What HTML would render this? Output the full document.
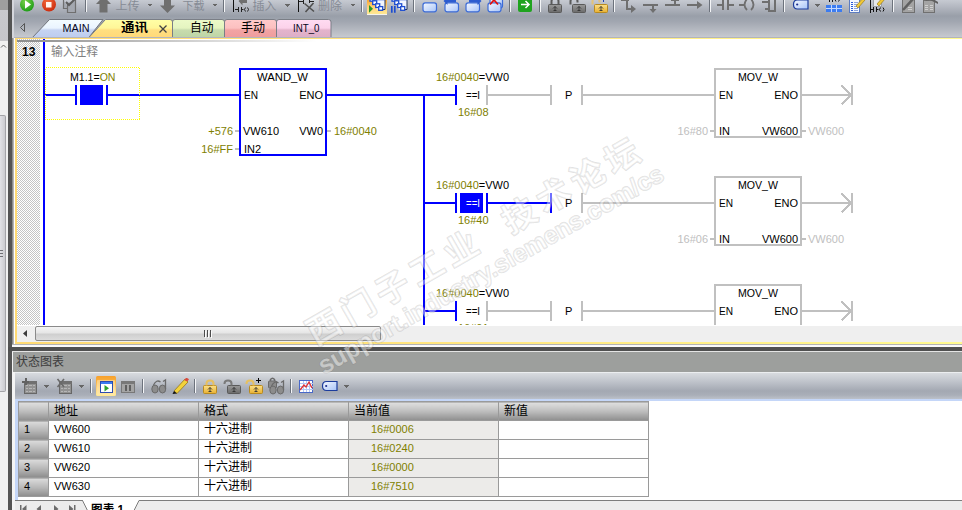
<!DOCTYPE html>
<html lang="zh-CN">
<head>
<meta charset="utf-8">
<title>STEP 7-Micro/WIN SMART</title>
<style>
html,body{margin:0;padding:0}
body{width:962px;height:510px;position:relative;overflow:hidden;background:#fff;font-family:"Liberation Sans","Noto Sans CJK SC",sans-serif;font-size:11px;color:#000}
div,span{position:absolute;box-sizing:border-box}
svg{position:absolute;left:0;top:0}
svg text{font-family:"Liberation Sans","Noto Sans CJK SC",sans-serif;font-size:11px}
.cj{font-family:"Liberation Sans","Noto Sans CJK SC",sans-serif;font-size:12px}
#leftstrip{left:0;top:0;width:8px;height:510px;background:linear-gradient(#9e9e9e 0,#9e9e9e 10px,#c9c9cd 10px,#c6c6ca 41px,#f0f0f0 41px)}
#lthumb{left:0;top:115px;width:6px;height:277px;border:1px solid #a4a4a8;border-left:none;border-radius:0 2px 2px 0;background:linear-gradient(90deg,#e2e2e6,#cbcbcf)}
#edge{left:12px;top:38px;width:3px;height:306px;background:linear-gradient(90deg,#8c8c8c 0,#8c8c8c 1px,#b4b4b4 1px,#b4b4b4 2px,#808080 2px)}
#edge2{left:12px;top:351px;width:3px;height:159px;background:#f4f4f4}
#darkbar{left:8px;top:0;width:4px;height:510px;background:#545454}
#toolbar{left:12px;top:0;width:950px;height:38px;border-left:2px solid #d4d6dc;background:linear-gradient(#c6cad2 0,#b3b7c0 7px,#999fa9 16px,#a2a7b1 22px,#c4c7cd 36px,#c9ccd1 38px)}
.tab{top:20px;height:18px;border-radius:3px 3px 0 0;text-align:center;line-height:17px;font-size:12px}
#editor{left:14px;top:38px;width:948px;height:306px;background:#fff}
#gutter{left:17px;top:42px;width:23px;height:283px;background:#dedede}
#hscroll{left:17px;top:326px;width:945px;height:16px;background:#efefef}
#thumb{left:35px;top:326px;width:346px;height:15px;border:1px solid #8a8a8a;border-radius:2px;background:linear-gradient(#f4f4f4 0,#e6e6e6 45%,#cfcfcf 55%,#dcdcdc 100%)}
#split{left:8px;top:347px;width:954px;height:4px;background:#505050}
#sttitle{left:13px;top:352px;width:949px;height:20px;background:#9d9f9d;color:#3c3c3c;font-size:12px;line-height:21px;padding-left:3px;overflow:hidden}
#sttool{left:15px;top:372px;width:949px;height:27px;border-top:1px solid #eceef0;background:linear-gradient(#d8dbdf 0,#c4c8cf 7px,#a3a8b2 18px,#a9aeb8 22px,#bcc1ca 26px)}
#stbody{left:15px;top:399px;width:947px;height:101px;background:#fff;border-top:2px solid #c4d6f8;border-left:3px solid #c4d6f8}
#stfoot{left:15px;top:500px;width:949px;height:10px;background:#ececec;border-top:1px solid #8c8c8c}
table{position:absolute;left:18px;top:401px;border-collapse:collapse;font-size:11px}
td,th{border:1px solid #9a9a9a;height:19px;padding:0 0 2px 5px;text-align:left;font-weight:normal;box-sizing:border-box;white-space:nowrap;line-height:15px}
th{background:linear-gradient(#e0e0e0,#bdbdbd 50%,#8e8e8e);font-size:12px;height:19px;padding:1px 0 0 5px}
td.n{background:linear-gradient(#dcdcdc,#b4b4b4 55%,#8c8c8c);padding-left:5px}
td.v{background:#ecebe9;color:#808000;padding-left:22px}
</style>
</head>
<body>
<div id="leftstrip"></div>
<div id="lthumb"></div>
<div id="darkbar"></div>
<div id="edge"></div>
<div id="edge2"></div>
<div id="toolbar"></div>

<div id="editor"></div>
<div id="gutter"></div>
<div id="hscroll"></div>
<div id="thumb"></div>
<div id="split"></div>
<div id="sttitle" class="cj">状态图表</div>
<div id="sttool"></div>
<div id="stbody"></div>
<div id="stfoot"></div>

<table>
<tr><th style="width:30px"></th><th style="width:150px">地址</th><th style="width:150px">格式</th><th style="width:150px">当前值</th><th style="width:150px">新值</th></tr>
<tr><td class="n">1</td><td>VW600</td><td class="cj">十六进制</td><td class="v">16#0006</td><td></td></tr>
<tr><td class="n">2</td><td>VW610</td><td class="cj">十六进制</td><td class="v">16#0240</td><td></td></tr>
<tr><td class="n">3</td><td>VW620</td><td class="cj">十六进制</td><td class="v">16#0000</td><td></td></tr>
<tr><td class="n">4</td><td>VW630</td><td class="cj">十六进制</td><td class="v">16#7510</td><td></td></tr>
</table>

<svg id="ladder" width="962" height="325" viewBox="0 0 962 325" shape-rendering="crispEdges">
<rect x="43" y="39" width="2" height="286" fill="#0000ff"/>
<rect x="45" y="94" width="30" height="2" fill="#0000ff"/>
<rect x="75" y="85" width="2" height="20" fill="#0000ff"/>
<rect x="80" y="85" width="23" height="20" fill="#0000ff"/>
<rect x="106" y="85" width="2" height="20" fill="#0000ff"/>
<rect x="108" y="94" width="131" height="2" fill="#0000ff"/>
<rect x="45.5" y="67.5" width="94" height="52" fill="none" stroke="#ffff00" stroke-width="1" stroke-dasharray="1 1"/>
<text x="70" y="81" textLength="45.5" lengthAdjust="spacingAndGlyphs"><tspan fill="#000">M1.1=</tspan><tspan fill="#808000">ON</tspan></text>
<rect x="240" y="69" width="86" height="86" fill="none" stroke="#0000ff" stroke-width="2"/>
<text x="257" y="81" fill="#000" textLength="51" lengthAdjust="spacingAndGlyphs">WAND_W</text>
<text x="244" y="99" fill="#000" textLength="14" lengthAdjust="spacingAndGlyphs">EN</text>
<text x="323" y="99" fill="#000" text-anchor="end">ENO</text>
<text x="243" y="135" fill="#000">VW610</text>
<text x="323" y="135" fill="#000" text-anchor="end">VW0</text>
<text x="244" y="153" fill="#000">IN2</text>
<text x="233" y="135" fill="#808000" text-anchor="end">+576</text>
<text x="233" y="153" fill="#808000" text-anchor="end">16#FF</text>
<text x="334" y="135" fill="#808000">16#0040</text>
<rect x="235" y="130" width="4" height="2" fill="#c0c0c0"/>
<rect x="235" y="148" width="4" height="2" fill="#c0c0c0"/>
<rect x="327" y="130" width="4" height="2" fill="#c0c0c0"/>
<rect x="327" y="94" width="98" height="2" fill="#0000ff"/>
<rect x="423" y="94" width="2" height="231" fill="#0000ff"/>
<rect x="425" y="94" width="30" height="2" fill="#0000ff"/>
<rect x="455" y="85" width="2" height="20" fill="#0000ff"/>
<rect x="486" y="85" width="2" height="20" fill="#c0c0c0"/>
<rect x="488" y="94" width="62" height="2" fill="#c0c0c0"/>
<rect x="550" y="85" width="2" height="20" fill="#c0c0c0"/>
<rect x="581" y="85" width="2" height="20" fill="#c0c0c0"/>
<rect x="583" y="94" width="131" height="2" fill="#c0c0c0"/>
<text x="436" y="81" textLength="73" lengthAdjust="spacingAndGlyphs"><tspan fill="#808000">16#0040</tspan><tspan fill="#000">=VW0</tspan></text>
<text x="466" y="99" fill="#000" textLength="14" lengthAdjust="spacingAndGlyphs">==I</text>
<text x="565" y="99" fill="#000">P</text>
<rect x="715" y="69" width="86" height="68" fill="none" stroke="#c0c0c0" stroke-width="2"/>
<text x="738" y="81" fill="#000" textLength="40" lengthAdjust="spacingAndGlyphs">MOV_W</text>
<text x="719" y="99" fill="#000" textLength="14" lengthAdjust="spacingAndGlyphs">EN</text>
<text x="798" y="99" fill="#000" text-anchor="end">ENO</text>
<text x="719" y="135" fill="#000">IN</text>
<text x="798" y="135" fill="#000" text-anchor="end">VW600</text>
<rect x="710" y="130" width="4" height="2" fill="#c0c0c0"/>
<rect x="802" y="130" width="4" height="2" fill="#c0c0c0"/>
<text x="808" y="135" fill="#c0c0c0">VW600</text>
<rect x="802" y="94" width="49" height="2" fill="#c0c0c0"/>
<rect x="851" y="85" width="2" height="20" fill="#c0c0c0"/>
<path d="M841.5 85.5 L851 95 L841.5 104.5" fill="none" stroke="#c0c0c0" stroke-width="2"/>
<rect x="425" y="202" width="30" height="2" fill="#0000ff"/>
<rect x="455" y="193" width="2" height="20" fill="#0000ff"/>
<rect x="460" y="193" width="23" height="20" fill="#0000ff"/>
<rect x="486" y="193" width="2" height="20" fill="#0000ff"/>
<rect x="488" y="202" width="62" height="2" fill="#0000ff"/>
<rect x="550" y="193" width="2" height="20" fill="#0000ff"/>
<rect x="581" y="193" width="2" height="20" fill="#c0c0c0"/>
<rect x="583" y="202" width="131" height="2" fill="#c0c0c0"/>
<text x="436" y="189" textLength="73" lengthAdjust="spacingAndGlyphs"><tspan fill="#808000">16#0040</tspan><tspan fill="#000">=VW0</tspan></text>
<text x="466" y="207" fill="#fff" textLength="14" lengthAdjust="spacingAndGlyphs">==I</text>
<text x="565" y="207" fill="#000">P</text>
<rect x="715" y="177" width="86" height="68" fill="none" stroke="#c0c0c0" stroke-width="2"/>
<text x="738" y="189" fill="#000" textLength="40" lengthAdjust="spacingAndGlyphs">MOV_W</text>
<text x="719" y="207" fill="#000" textLength="14" lengthAdjust="spacingAndGlyphs">EN</text>
<text x="798" y="207" fill="#000" text-anchor="end">ENO</text>
<text x="719" y="243" fill="#000">IN</text>
<text x="798" y="243" fill="#000" text-anchor="end">VW600</text>
<rect x="710" y="238" width="4" height="2" fill="#c0c0c0"/>
<rect x="802" y="238" width="4" height="2" fill="#c0c0c0"/>
<text x="808" y="243" fill="#c0c0c0">VW600</text>
<rect x="802" y="202" width="49" height="2" fill="#c0c0c0"/>
<rect x="851" y="193" width="2" height="20" fill="#c0c0c0"/>
<path d="M841.5 193.5 L851 203 L841.5 212.5" fill="none" stroke="#c0c0c0" stroke-width="2"/>
<rect x="425" y="310" width="30" height="2" fill="#0000ff"/>
<rect x="455" y="301" width="2" height="20" fill="#0000ff"/>
<rect x="486" y="301" width="2" height="20" fill="#c0c0c0"/>
<rect x="488" y="310" width="62" height="2" fill="#c0c0c0"/>
<rect x="550" y="301" width="2" height="20" fill="#c0c0c0"/>
<rect x="581" y="301" width="2" height="20" fill="#c0c0c0"/>
<rect x="583" y="310" width="131" height="2" fill="#c0c0c0"/>
<text x="436" y="297" textLength="73" lengthAdjust="spacingAndGlyphs"><tspan fill="#808000">16#0040</tspan><tspan fill="#000">=VW0</tspan></text>
<text x="466" y="315" fill="#000" textLength="14" lengthAdjust="spacingAndGlyphs">==I</text>
<text x="565" y="315" fill="#000">P</text>
<rect x="715" y="285" width="86" height="68" fill="none" stroke="#c0c0c0" stroke-width="2"/>
<text x="738" y="297" fill="#000" textLength="40" lengthAdjust="spacingAndGlyphs">MOV_W</text>
<text x="719" y="315" fill="#000" textLength="14" lengthAdjust="spacingAndGlyphs">EN</text>
<text x="798" y="315" fill="#000" text-anchor="end">ENO</text>
<text x="719" y="351" fill="#000">IN</text>
<text x="798" y="351" fill="#000" text-anchor="end">VW600</text>
<rect x="710" y="346" width="4" height="2" fill="#c0c0c0"/>
<rect x="802" y="346" width="4" height="2" fill="#c0c0c0"/>
<text x="808" y="351" fill="#c0c0c0">VW600</text>
<rect x="802" y="310" width="49" height="2" fill="#c0c0c0"/>
<rect x="851" y="301" width="2" height="20" fill="#c0c0c0"/>
<path d="M841.5 301.5 L851 311 L841.5 320.5" fill="none" stroke="#c0c0c0" stroke-width="2"/>
<text x="708" y="135" fill="#c0c0c0" text-anchor="end">16#80</text>
<text x="708" y="243" fill="#c0c0c0" text-anchor="end">16#06</text>
<text x="458" y="116" fill="#808000">16#08</text>
<text x="458" y="224" fill="#808000">16#40</text>
<text x="458" y="332" fill="#808000">16#01</text>
<text x="51" y="56" class="cj" fill="#808080" textLength="47" lengthAdjust="spacingAndGlyphs">输入注释</text>
</svg>
<svg id="chrome" width="962" height="510" viewBox="0 0 962 510" shape-rendering="crispEdges">
<defs>
<linearGradient id="gMain" x1="0" y1="0" x2="0" y2="1"><stop offset="0" stop-color="#f4fcff"/><stop offset="0.45" stop-color="#eaf4ff"/><stop offset="0.55" stop-color="#c6d4f2"/><stop offset="1" stop-color="#bccbee"/></linearGradient>
<linearGradient id="gYel" x1="0" y1="0" x2="0" y2="1"><stop offset="0" stop-color="#ffffa6"/><stop offset="0.45" stop-color="#fff698"/><stop offset="0.55" stop-color="#ffdf80"/><stop offset="1" stop-color="#ffd878"/></linearGradient>
<linearGradient id="gGrn" x1="0" y1="0" x2="0" y2="1"><stop offset="0" stop-color="#ecfac8"/><stop offset="0.45" stop-color="#e4f4c0"/><stop offset="0.55" stop-color="#c8dcae"/><stop offset="1" stop-color="#bcd4a4"/></linearGradient>
<linearGradient id="gRed" x1="0" y1="0" x2="0" y2="1"><stop offset="0" stop-color="#ffcaca"/><stop offset="0.45" stop-color="#fcc0c0"/><stop offset="0.55" stop-color="#f2a4a4"/><stop offset="1" stop-color="#ee9c9c"/></linearGradient>
<linearGradient id="gPnk" x1="0" y1="0" x2="0" y2="1"><stop offset="0" stop-color="#ffdcf2"/><stop offset="0.45" stop-color="#fcd2ea"/><stop offset="0.55" stop-color="#e4b4cc"/><stop offset="1" stop-color="#dcaec6"/></linearGradient>
<linearGradient id="gHot" x1="0" y1="0" x2="0" y2="1"><stop offset="0" stop-color="#f9b24a"/><stop offset="0.4" stop-color="#ffd890"/><stop offset="1" stop-color="#fff2c4"/></linearGradient>
<linearGradient id="gHot2" x1="0" y1="0" x2="0" y2="1"><stop offset="0" stop-color="#f7a02c"/><stop offset="0.25" stop-color="#f9b040"/><stop offset="0.6" stop-color="#ffd27a"/><stop offset="1" stop-color="#ffea96"/></linearGradient>
<linearGradient id="gBlu" x1="0" y1="0" x2="1" y2="1"><stop offset="0" stop-color="#f4f8ff"/><stop offset="1" stop-color="#a8c4f8"/></linearGradient>
<radialGradient id="gPlay" cx="0.4" cy="0.3" r="0.8"><stop offset="0" stop-color="#7ad24a"/><stop offset="1" stop-color="#129612"/></radialGradient>
<radialGradient id="gStop" cx="0.4" cy="0.3" r="0.8"><stop offset="0" stop-color="#f46a3c"/><stop offset="1" stop-color="#c62408"/></radialGradient>
<linearGradient id="gGold" x1="0" y1="0" x2="0" y2="1"><stop offset="0" stop-color="#fbe08a"/><stop offset="1" stop-color="#e8b030"/></linearGradient>
<linearGradient id="gLockG" x1="0" y1="0" x2="0" y2="1"><stop offset="0" stop-color="#9a9a9a"/><stop offset="1" stop-color="#6a6a6a"/></linearGradient>
<linearGradient id="gFade" x1="0" y1="0" x2="1" y2="0"><stop offset="0" stop-color="#8c8c8c"/><stop offset="0.5" stop-color="#c8c8c8"/><stop offset="1" stop-color="#ffffff"/></linearGradient>
<linearGradient id="gYelH" x1="0" y1="0" x2="1" y2="0"><stop offset="0" stop-color="#ffda74"/><stop offset="0.5" stop-color="#ffe680"/><stop offset="1" stop-color="#fffa90"/></linearGradient>
<pattern id="dots" width="2" height="2" patternUnits="userSpaceOnUse"><rect width="2" height="2" fill="#fff"/><rect width="1" height="1" fill="#c4c4c4"/><rect x="1" y="1" width="1" height="1" fill="#c4c4c4"/></pattern>
</defs>
<g shape-rendering="geometricPrecision">
<path d="M31.5 38.5 L49.5 19.5 H103 L88 38.5 Z" fill="url(#gMain)" stroke="#70747c" stroke-width="1"/>
<path d="M88 38.5 L105.5 19.5 H170 Q172.5 19.5 172.5 22 V38.5 Z" fill="url(#gYel)" stroke="#7a7e86" stroke-width="1"/>
<path d="M172.5 38.5 V22 Q172.5 19.5 175 19.5 H222 Q224.5 19.5 224.5 22 V38.5 Z" fill="url(#gGrn)" stroke="#7a7e86" stroke-width="1"/>
<path d="M224.5 38.5 V22 Q224.5 19.5 227 19.5 H274 Q276.5 19.5 276.5 22 V38.5 Z" fill="url(#gRed)" stroke="#7a7e86" stroke-width="1"/>
<path d="M276.5 38.5 V22 Q276.5 19.5 279 19.5 H328.5 Q331 19.5 331 22 V38.5 Z" fill="url(#gPnk)" stroke="#7a7e86" stroke-width="1"/>
<path d="M24.5 23.5 L20.5 27.5 L24.5 31.5 Z" fill="none" stroke="#555" stroke-width="1"/>
</g>
<text x="62.5" y="32" fill="#06061c" textLength="27" lengthAdjust="spacingAndGlyphs">MAIN</text>
<text x="121" y="32" class="cj" font-weight="bold" textLength="27" lengthAdjust="spacingAndGlyphs">通讯</text>
<path d="M159.5 25.5 l7 7 M166.5 25.5 l-7 7" stroke="#444" stroke-width="1.3" fill="none" shape-rendering="geometricPrecision"/>
<text x="190" y="32" class="cj" textLength="23.5" lengthAdjust="spacingAndGlyphs">自动</text>
<text x="241" y="32" class="cj" textLength="24" lengthAdjust="spacingAndGlyphs">手动</text>
<text x="293" y="32" fill="#06061c" textLength="26.5" lengthAdjust="spacingAndGlyphs">INT_0</text>
<rect x="14" y="37" width="948" height="1" fill="#b2b4bc"/>
<rect x="15" y="38" width="947" height="1" fill="url(#gYelH)"/>
<rect x="15" y="38" width="2" height="306" fill="#ffda74"/>
<rect x="15" y="342" width="947" height="2" fill="url(#gYelH)"/>
<rect x="12" y="344" width="950" height="1" fill="#b4b4b4"/>
<rect x="12" y="345" width="950" height="2" fill="#fafafa"/>
<rect x="12" y="351" width="950" height="1" fill="#e4e4e4"/>
<rect x="17" y="39" width="23" height="1" fill="url(#dots)"/>
<rect x="17" y="40" width="300" height="2" fill="url(#gFade)"/>
<rect x="17" y="42" width="23" height="283" fill="url(#dots)"/>
<text x="22" y="56" font-weight="bold" style="font-size:12.5px" textLength="13.5" lengthAdjust="spacingAndGlyphs">13</text>
<g shape-rendering="geometricPrecision">
<circle cx="27" cy="4.5" r="7" fill="url(#gPlay)"/><path d="M25 0.2 L31 4.5 L25 8.8 Z" fill="#fff"/>
<circle cx="49" cy="4.5" r="7" fill="url(#gStop)"/><rect x="46" y="2" width="5.5" height="5.5" fill="#fff4ee"/>
<path d="M63.5 0 V8.5 H68 M67.5 3 V12.5 H75.5 V0" fill="#a4a8b0" stroke="#6f6f6f" stroke-width="1.2"/><path d="M66 2 l3 3 l6 -6" fill="none" stroke="#5c5c5c" stroke-width="2"/>
<path d="M96 4 L103.5 -4 L111 4 H107.5 V12.5 H99.5 V4 Z" fill="#6f6f6f"/>
<path d="M164 -2 H171 V5.5 H175 L167.5 13 L160 5.5 H164 Z" fill="#6f6f6f"/>
</g>
<rect x="85" y="0" width="1" height="12" fill="#6c727c"/><rect x="86" y="0" width="1" height="12" fill="#f4f5f7"/>
<rect x="223" y="0" width="1" height="12" fill="#6c727c"/><rect x="224" y="0" width="1" height="12" fill="#f4f5f7"/>
<rect x="361" y="0" width="1" height="12" fill="#6c727c"/><rect x="362" y="0" width="1" height="12" fill="#f4f5f7"/>
<rect x="413" y="0" width="1" height="12" fill="#6c727c"/><rect x="414" y="0" width="1" height="12" fill="#f4f5f7"/>
<rect x="509" y="0" width="1" height="12" fill="#6c727c"/><rect x="510" y="0" width="1" height="12" fill="#f4f5f7"/>
<rect x="539" y="0" width="1" height="12" fill="#6c727c"/><rect x="540" y="0" width="1" height="12" fill="#f4f5f7"/>
<rect x="613" y="0" width="1" height="12" fill="#6c727c"/><rect x="614" y="0" width="1" height="12" fill="#f4f5f7"/>
<rect x="709" y="0" width="1" height="12" fill="#6c727c"/><rect x="710" y="0" width="1" height="12" fill="#f4f5f7"/>
<rect x="783" y="0" width="1" height="12" fill="#6c727c"/><rect x="784" y="0" width="1" height="12" fill="#f4f5f7"/>
<rect x="892" y="0" width="1" height="12" fill="#6c727c"/><rect x="893" y="0" width="1" height="12" fill="#f4f5f7"/>
<path d="M147.5 4h5l-2.5 3z" fill="#666"/>
<path d="M212.5 4h5l-2.5 3z" fill="#666"/>
<path d="M285 4h5l-2.5 3z" fill="#666"/>
<path d="M350.5 4h5l-2.5 3z" fill="#666"/>
<path d="M815 4h5l-2.5 3z" fill="#666"/>
<g class="cj" fill="#868b95">
<text x="115.5" y="9.5" textLength="24" lengthAdjust="spacingAndGlyphs">上传</text>
<text x="182.5" y="9.5" textLength="22" lengthAdjust="spacingAndGlyphs">下载</text>
<text x="252.5" y="9.5" textLength="24" lengthAdjust="spacingAndGlyphs">插入</text>
<text x="318" y="9.5" textLength="24" lengthAdjust="spacingAndGlyphs">删除</text>
</g>
<rect x="233" y="0" width="1" height="12" fill="#111"/>
<path d="M238.5 1 L242.5 -3 V-0.5 H247 V3 H242.5 V5.5 Z" fill="#6f6f6f" shape-rendering="geometricPrecision"/>
<path d="M235 9.5 h3 M238.5 7 v5 M241.5 7 v5 M241.5 9.5 h2 M245.5 7.5 q-2 2 0 4 M247.5 7.5 q2 2 0 4" stroke="#222" stroke-width="1" fill="none" shape-rendering="geometricPrecision"/>
<rect x="298" y="0" width="1" height="12" fill="#111"/>
<path d="M299 1.5 h4 M303.5 -1 v5 M309.5 -1 v4 M309.5 1.5 h4" stroke="#222" stroke-width="1" fill="none"/>
<path d="M304.5 3.5 L314 11.5 M313.5 3 L305.5 12" stroke="#505050" stroke-width="1.6" fill="none" shape-rendering="geometricPrecision"/>
<rect x="367" y="-3" width="20" height="17.5" rx="1" fill="url(#gHot2)" shape-rendering="geometricPrecision"/><rect x="367" y="14" width="20" height="1" fill="#f6f3ea"/>
<g shape-rendering="geometricPrecision"><rect x="376.5" y="-2" width="8.5" height="11.5" fill="#f2f6ff"/><path d="M385 -2 V9.5 H381" fill="none" stroke="#22345c" stroke-width="1"/><path d="M374 -0.5 H385" stroke="#1c4cd0" stroke-width="1.5"/><rect x="370" y="-2.5" width="4" height="3.7" fill="#fff" stroke="#1c4cd0" stroke-width="1.3"/><rect x="372.7" y="0.8" width="4" height="3.7" fill="#fff" stroke="#1c4cd0" stroke-width="1.3"/><rect x="375.7" y="3.8" width="4" height="3.7" fill="#fff" stroke="#1c4cd0" stroke-width="1.3"/><rect x="378.7" y="6.6" width="4" height="3.7" fill="#fff" stroke="#1c4cd0" stroke-width="1.3"/><path d="M369 5 L373 8.8 L369 12.8 Z" fill="#2a9a2a"/>
<rect x="398.5" y="-2" width="8.5" height="11.5" fill="#f2f6ff"/><path d="M407 -2 V9.5 H403" fill="none" stroke="#22345c" stroke-width="1"/><path d="M396 -0.5 H407" stroke="#1c4cd0" stroke-width="1.5"/><rect x="392" y="-2.5" width="4" height="3.7" fill="#fff" stroke="#1c4cd0" stroke-width="1.3"/><rect x="394.7" y="0.8" width="4" height="3.7" fill="#fff" stroke="#1c4cd0" stroke-width="1.3"/><rect x="397.7" y="3.8" width="4" height="3.7" fill="#fff" stroke="#1c4cd0" stroke-width="1.3"/><rect x="400.7" y="6.6" width="4" height="3.7" fill="#fff" stroke="#1c4cd0" stroke-width="1.3"/><path d="M391.8 6v6.7 M394.8 6v6.7" stroke="#1c4cd0" stroke-width="1.7"/>
<rect x="423" y="2.8" width="13.5" height="9" rx="2.2" fill="url(#gBlu)" stroke="#3c6cd8" stroke-width="1.2"/>
<rect x="445" y="2.8" width="13.5" height="9" rx="2.2" fill="url(#gBlu)" stroke="#3c6cd8" stroke-width="1.2"/><path d="M443.5 1 L447.5 -3 V-0.5 H456 V2.5 H447.5 V5 Z" fill="#2c5cd0"/>
<rect x="466" y="2.8" width="13.5" height="9" rx="2.2" fill="url(#gBlu)" stroke="#3c6cd8" stroke-width="1.2"/><path d="M481.5 1 L477.5 -3 V-0.5 H469 V2.5 H477.5 V5 Z" fill="#2c5cd0"/>
<rect x="490" y="-2" width="12.5" height="10" rx="2.2" fill="url(#gBlu)" stroke="#3c6cd8" stroke-width="1.2"/><rect x="488" y="2.8" width="13" height="9" rx="2.2" fill="url(#gBlu)" stroke="#3c6cd8" stroke-width="1.2"/><path d="M490 4.5 L494 0 L498 4.5" fill="none" stroke="#e01010" stroke-width="1.8"/>
<rect x="518" y="-3" width="14" height="15" rx="2" fill="#1fa31f"/><path d="M521 4.5 h7.5 M525.5 1 l3.5 3.5 l-3.5 3.5" fill="none" stroke="#fff" stroke-width="1.5"/>
<rect x="548.5" y="4.5" width="13" height="8" rx="1" fill="url(#gLockG)" stroke="#5a5a5a" stroke-width="1"/><path d="M555.0 6.5 v4 M553.0 8.5 l2 -2 l2 2 M553.5 10.5 h3" fill="none" stroke="#333" stroke-width="0.9"/><path d="M551.5 4.5 V1.5 Q551.5 -2 555.0 -2 Q558.5 -2 558.5 1.5 V4.5" fill="none" stroke="#5a5a5a" stroke-width="2"/>
<rect x="572.5" y="4.5" width="13" height="8" rx="1" fill="url(#gLockG)" stroke="#5a5a5a" stroke-width="1"/><path d="M579.0 6.5 v4 M577.0 8.5 l2 -2 l2 2 M577.5 10.5 h3" fill="none" stroke="#333" stroke-width="0.9"/><path d="M570.5 4.5 V1.5 Q570.5 -2 574.0 -2 Q577.5 -2 577.5 1.5 V2.5" fill="none" stroke="#5a5a5a" stroke-width="2"/>
<rect x="594.5" y="4.5" width="13" height="8" rx="1" fill="url(#gGold)" stroke="#b88a20" stroke-width="1"/><path d="M601.0 6.5 v4 M599.0 8.5 l2 -2 l2 2 M599.5 10.5 h3" fill="none" stroke="#333" stroke-width="0.9"/><path d="M592.5 4.5 V1.5 Q592.5 -2 596.0 -2 Q599.5 -2 599.5 1.5 V2.5" fill="none" stroke="#e2c27a" stroke-width="2"/>
</g>
<rect x="603" y="0" width="1" height="2" fill="#1c3cb0"/>
<path d="M621 0 h8 M627 0 v9 h5" fill="none" stroke="#6f6f6f" stroke-width="2"/><path d="M631 5 l5 4 l-5 4z" fill="#6f6f6f" shape-rendering="geometricPrecision"/>
<rect x="643" y="4" width="15" height="2" fill="#6f6f6f"/><rect x="652" y="5" width="2" height="5" fill="#6f6f6f"/><path d="M649.5 9 h7 l-3.5 4z" fill="#6f6f6f" shape-rendering="geometricPrecision"/>
<rect x="665" y="4" width="15" height="2" fill="#6f6f6f"/><rect x="674" y="0" width="2" height="4" fill="#6f6f6f"/><rect x="671" y="0" width="8" height="1" fill="#6f6f6f"/>
<rect x="687" y="4" width="11" height="2" fill="#6f6f6f"/><path d="M697 1 l5.5 4 l-5.5 4z" fill="#6f6f6f" shape-rendering="geometricPrecision"/>
<rect x="717" y="4" width="6" height="2" fill="#6f6f6f"/><rect x="722" y="0" width="2" height="10" fill="#6f6f6f"/><rect x="727" y="0" width="2" height="10" fill="#6f6f6f"/><rect x="728" y="4" width="6" height="2" fill="#6f6f6f"/>
<rect x="739" y="4" width="5" height="2" fill="#6f6f6f"/><path d="M747 -1 Q742 5 747 10 M751 -1 Q756 5 751 10" fill="none" stroke="#6f6f6f" stroke-width="1.8" shape-rendering="geometricPrecision"/>
<rect x="762" y="1" width="7" height="2" fill="#6f6f6f"/><rect x="765" y="8" width="4" height="2" fill="#6f6f6f"/><rect x="769" y="-2" width="6" height="13" fill="none" stroke="#6f6f6f" stroke-width="2"/>
<g shape-rendering="geometricPrecision"><path d="M797.5 0 H808.0 V9 H797.5 Q793.5 9 793.5 4.5 Q793.5 0 797.5 0 Z" fill="url(#gBlu)" stroke="#1c3c9c" stroke-width="1.2"/><circle cx="797.2" cy="4.5" r="1.1" fill="#1c2c8c"/></g>
<path d="M827 -0.5 h2 M829.5 -3 v5 M832.5 -3 v5 M832.5 -0.5 h2 M836 -2 q-2 1.5 0 3.5 M838.5 -2 q2 1.5 0 3.5" stroke="#111" stroke-width="1" fill="none" shape-rendering="geometricPrecision"/>
<rect x="826" y="5" width="16" height="7" fill="#3c7cf0"/><rect x="826" y="8" width="16" height="1" fill="#c4d8ff"/><rect x="831" y="5" width="1" height="7" fill="#c4d8ff"/><rect x="836" y="5" width="1" height="7" fill="#c4d8ff"/>
<rect x="849.5" y="-1.5" width="10" height="14" fill="#f6f9ff" stroke="#5c7cc0" stroke-width="1"/><rect x="851" y="2" width="2" height="1" fill="#2c5cd8"/><rect x="854" y="2" width="4" height="1" fill="#8ca4d8"/><rect x="851" y="4" width="2" height="1" fill="#2c5cd8"/><rect x="854" y="4" width="4" height="1" fill="#8ca4d8"/><rect x="851" y="6" width="2" height="1" fill="#2c5cd8"/><rect x="854" y="6" width="4" height="1" fill="#8ca4d8"/><rect x="851" y="8" width="2" height="1" fill="#2c5cd8"/><rect x="854" y="8" width="4" height="1" fill="#8ca4d8"/><rect x="851" y="10" width="2" height="1" fill="#2c5cd8"/><rect x="854" y="10" width="4" height="1" fill="#8ca4d8"/><path d="M856 6 L863 -2 L865 0 L858 8 Z" fill="#f0c838" stroke="#8c6c10" stroke-width="0.6" shape-rendering="geometricPrecision"/>
<rect x="870" y="-1" width="1" height="14" fill="#111"/><rect x="873.5" y="-2.5" width="8" height="9" fill="#e6e9ee" stroke="#9ca0a8" stroke-width="1"/><path d="M877 4 L883 -3 L885 -1 L879 6 Z" fill="#f0c838" stroke="#8c6c10" stroke-width="0.6" shape-rendering="geometricPrecision"/>
<path d="M871 9.5 h2 M873.5 7 v5 M876.5 7 v5 M876.5 9.5 h2 M880.5 7.5 q-2 2 0 4 M883 7.5 q2 2 0 4" stroke="#111" stroke-width="1" fill="none" shape-rendering="geometricPrecision"/>
<rect x="902.5" y="-1.5" width="11.5" height="14" fill="#a4a4a4" stroke="#707070" stroke-width="1"/><path d="M903 10 L913 -1" stroke="#606060" stroke-width="2.6" shape-rendering="geometricPrecision"/><rect x="908" y="7" width="4" height="1" fill="#cfcfcf"/><rect x="908" y="9" width="4" height="1" fill="#cfcfcf"/>
<rect x="923.5" y="0.5" width="11" height="12" fill="#a4a4a4" stroke="#707070" stroke-width="1"/><rect x="925" y="5" width="3" height="1" fill="#cfcfcf"/><rect x="930" y="5" width="3" height="1" fill="#cfcfcf"/><rect x="925" y="7" width="3" height="1" fill="#cfcfcf"/><rect x="930" y="7" width="3" height="1" fill="#cfcfcf"/><rect x="925" y="9" width="3" height="1" fill="#cfcfcf"/><rect x="930" y="9" width="3" height="1" fill="#cfcfcf"/><path d="M925 1 L930 -3 L938 2 V4 L930 0 Z" fill="#606060" shape-rendering="geometricPrecision"/>
<path d="M1 47.5 L3.5 45 L6 47.5" fill="none" stroke="#666" stroke-width="1" shape-rendering="geometricPrecision"/>
<rect x="0" y="250" width="3" height="1" fill="#707074"/><rect x="0" y="253" width="3" height="1" fill="#707074"/><rect x="0" y="256" width="3" height="1" fill="#707074"/>
<path d="M23 333.5 L27 330 V337 Z" fill="#3c3c3c" shape-rendering="geometricPrecision"/>
<rect x="204" y="330" width="1" height="7" fill="#4c4c4c"/><rect x="207" y="330" width="1" height="7" fill="#4c4c4c"/><rect x="210" y="330" width="1" height="7" fill="#4c4c4c"/><rect x="205" y="331" width="1" height="7" fill="#fbfbfb"/><rect x="208" y="331" width="1" height="7" fill="#fbfbfb"/><rect x="211" y="331" width="1" height="7" fill="#fbfbfb"/>
<rect x="24.5" y="381.5" width="12" height="12" fill="#929292" stroke="#676767" stroke-width="1"/><rect x="24" y="381" width="13" height="3" fill="#707070"/><rect x="26" y="385" width="2" height="1" fill="#b6b6b6"/><rect x="29" y="385" width="3" height="1" fill="#b6b6b6"/><rect x="33" y="385" width="2" height="1" fill="#b6b6b6"/><rect x="26" y="388" width="2" height="1" fill="#b6b6b6"/><rect x="29" y="388" width="3" height="1" fill="#b6b6b6"/><rect x="33" y="388" width="2" height="1" fill="#b6b6b6"/><rect x="26" y="391" width="2" height="1" fill="#b6b6b6"/><rect x="29" y="391" width="3" height="1" fill="#b6b6b6"/><rect x="33" y="391" width="2" height="1" fill="#b6b6b6"/><rect x="22" y="381" width="7" height="2" fill="#626262"/><rect x="24.5" y="378" width="2" height="7" fill="#626262"/>
<rect x="59.5" y="381.5" width="12" height="12" fill="#929292" stroke="#676767" stroke-width="1"/><rect x="59" y="381" width="13" height="3" fill="#707070"/><rect x="61" y="385" width="2" height="1" fill="#b6b6b6"/><rect x="64" y="385" width="3" height="1" fill="#b6b6b6"/><rect x="68" y="385" width="2" height="1" fill="#b6b6b6"/><rect x="61" y="388" width="2" height="1" fill="#b6b6b6"/><rect x="64" y="388" width="3" height="1" fill="#b6b6b6"/><rect x="68" y="388" width="2" height="1" fill="#b6b6b6"/><rect x="61" y="391" width="2" height="1" fill="#b6b6b6"/><rect x="64" y="391" width="3" height="1" fill="#b6b6b6"/><rect x="68" y="391" width="2" height="1" fill="#b6b6b6"/><path d="M57.5 379 L64 387 M64 379 L57.5 387" stroke="#6a6a6a" stroke-width="1.6" shape-rendering="geometricPrecision"/>
<path d="M44 385h5l-2.5 3z" fill="#666"/><path d="M79 385h5l-2.5 3z" fill="#666"/><path d="M344 385h5l-2.5 3z" fill="#666"/>
<rect x="90" y="379" width="1" height="14" fill="#6c727c"/><rect x="91" y="379" width="1" height="14" fill="#f4f5f7"/><rect x="142" y="379" width="1" height="14" fill="#6c727c"/><rect x="143" y="379" width="1" height="14" fill="#f4f5f7"/><rect x="194" y="379" width="1" height="14" fill="#6c727c"/><rect x="195" y="379" width="1" height="14" fill="#f4f5f7"/><rect x="290" y="379" width="1" height="14" fill="#6c727c"/><rect x="291" y="379" width="1" height="14" fill="#f4f5f7"/>
<rect x="96" y="376" width="20" height="20" rx="1.5" fill="url(#gHot2)" shape-rendering="geometricPrecision"/><rect x="97" y="380" width="18" height="15" rx="1" fill="#ffe9b4" opacity="0.55" shape-rendering="geometricPrecision"/>
<rect x="100.5" y="381.5" width="12" height="11" fill="#fff" stroke="#2c4cb0" stroke-width="1"/><rect x="101" y="382" width="11" height="2" fill="#3c7cf0"/><path d="M104.5 385 L109 388.2 L104.5 391.5 Z" fill="#2ca42c" shape-rendering="geometricPrecision"/>
<rect x="121.5" y="381.5" width="13" height="11" fill="#a4a4a4" stroke="#787878" stroke-width="1"/><rect x="121" y="381" width="14" height="3" fill="#787878"/><rect x="125" y="385" width="2" height="6" fill="#606060"/><rect x="129" y="385" width="2" height="6" fill="#606060"/>
<g shape-rendering="geometricPrecision"><ellipse cx="155.0" cy="389" rx="3.2" ry="4" fill="#8c8c8c" stroke="#6a6a6a" stroke-width="1"/><ellipse cx="162.5" cy="389" rx="3.2" ry="4" fill="#8c8c8c" stroke="#6a6a6a" stroke-width="1"/><path d="M153.5 385 Q156.5 379 160.5 382 M165.5 389 V380 l-2.5 1.5" fill="none" stroke="#6a6a6a" stroke-width="1.3"/></g>
<g shape-rendering="geometricPrecision"><path d="M174 391 L185 379 L188 382 L177 393.5 Z" fill="#f2d23c" stroke="#8c6c10" stroke-width="0.7"/><path d="M184 380 L186 378 Q188 377.5 189 379.5 L187 381.5 Z" fill="#d84a3c"/><path d="M172.5 394 L174 391 L177 393.5 Z" fill="#111"/></g>
<g shape-rendering="geometricPrecision"><rect x="203.5" y="385.5" width="13" height="8" rx="1" fill="url(#gGold)" stroke="#b88a20" stroke-width="1"/><path d="M210.0 387.5 v4 M208.0 389.5 l2 -2 l2 2 M208.5 391.5 h3" fill="none" stroke="#333" stroke-width="0.9"/><path d="M206.5 385.5 V383.5 Q206.5 380.5 210.0 380.5 Q213.5 380.5 213.5 383.5 V385.5" fill="none" stroke="#e6c060" stroke-width="2"/></g>
<g shape-rendering="geometricPrecision"><rect x="227.5" y="385.5" width="13" height="8" rx="1" fill="url(#gLockG)" stroke="#5a5a5a" stroke-width="1"/><path d="M234.0 387.5 v4 M232.0 389.5 l2 -2 l2 2 M232.5 391.5 h3" fill="none" stroke="#333" stroke-width="0.9"/><path d="M224.5 384 V383.5 Q224.5 380.5 228.0 380.5 Q231.5 380.5 231.5 383.5 V385.5" fill="none" stroke="#7a7a7a" stroke-width="2"/></g>
<g shape-rendering="geometricPrecision"><rect x="249.5" y="385.5" width="13" height="8" rx="1" fill="url(#gGold)" stroke="#b88a20" stroke-width="1"/><path d="M256.0 387.5 v4 M254.0 389.5 l2 -2 l2 2 M254.5 391.5 h3" fill="none" stroke="#333" stroke-width="0.9"/><path d="M246.5 384 V383.5 Q246.5 380.5 250.0 380.5 Q253.5 380.5 253.5 383.5 V385.5" fill="none" stroke="#e6c060" stroke-width="2"/></g><rect x="258" y="378" width="1" height="5" fill="#000"/><rect x="256" y="380" width="5" height="1" fill="#000"/>
<g shape-rendering="geometricPrecision"><rect x="268.5" y="381" width="8" height="7" rx="1" fill="#8c8c8c" stroke="#6a6a6a"/><path d="M270.5 381 v-1.5 q2 -2.5 4 0 v1.5" fill="none" stroke="#6a6a6a" stroke-width="1.5"/></g><g shape-rendering="geometricPrecision"><ellipse cx="273.0" cy="390" rx="3.2" ry="4" fill="#8c8c8c" stroke="#6a6a6a" stroke-width="1"/><ellipse cx="280.5" cy="390" rx="3.2" ry="4" fill="#8c8c8c" stroke="#6a6a6a" stroke-width="1"/><path d="M271.5 386 Q274.5 380 278.5 383 M283.5 390 V381 l-2.5 1.5" fill="none" stroke="#6a6a6a" stroke-width="1.3"/></g>
<rect x="299.5" y="380.5" width="13" height="12" fill="#ffffff" stroke="#4868c8" stroke-width="1"/><rect x="300" y="383" width="13" height="1" fill="#b4c8f4"/><rect x="300" y="386" width="13" height="1" fill="#b4c8f4"/><rect x="300" y="389" width="13" height="1" fill="#b4c8f4"/><rect x="303" y="381" width="1" height="11" fill="#b4c8f4"/><rect x="306" y="381" width="1" height="11" fill="#b4c8f4"/><rect x="309" y="381" width="1" height="11" fill="#b4c8f4"/><path d="M300 390 L304 385 L306 387 L309 382 L312 388" fill="none" stroke="#e03030" stroke-width="1.3" shape-rendering="geometricPrecision"/>
<g shape-rendering="geometricPrecision"><path d="M326.5 381.5 H337.0 V390.5 H326.5 Q322.5 390.5 322.5 386.0 Q322.5 381.5 326.5 381.5 Z" fill="url(#gBlu)" stroke="#1c3c9c" stroke-width="1.2"/><circle cx="326.2" cy="386.0" r="1.1" fill="#1c2c8c"/></g>
<path d="M82.5 500 L87.5 510 H134 L139 500 Z" fill="#fff"/>
<path d="M15 500.5 H82.5 L87.5 510.5 M134 510.5 L139 500.5 H962" fill="none" stroke="#7c7c7c" stroke-width="1" shape-rendering="geometricPrecision"/>
<g fill="#6c6c6c" shape-rendering="geometricPrecision"><path d="M21 505 v6 M26.5 505 l-4.5 4 l4.5 4z"/><rect x="20" y="505" width="1.5" height="6"/><path d="M41 505 l-4.5 4 l4.5 4z"/><path d="M54 505 l4.5 4 l-4.5 4z"/><path d="M69 505 l4.5 4 l-4.5 4z"/><rect x="74" y="505" width="1.5" height="6"/></g>
<text x="91" y="513.5" class="cj" font-weight="bold" textLength="33" lengthAdjust="spacingAndGlyphs">图表 1</text>
</svg>
<svg id="wm" width="962" height="510" viewBox="0 0 962 510">
<g transform="translate(315.2,346.2) rotate(-29.8)" fill="rgba(255,255,255,0.45)" stroke="rgba(120,120,120,0.22)" stroke-width="1.5" stroke-linejoin="round" font-weight="bold" paint-order="stroke">
<text y="0" style="font-size:34px;letter-spacing:5.5px"><tspan x="0">西门子工业 </tspan><tspan x="225">技术论坛</tspan></text>
<text x="-6.7" y="29.2" style="font-size:25px" textLength="394" lengthAdjust="spacing">support.industry.siemens.com/cs</text>
</g>
</svg>
</body>
</html>
